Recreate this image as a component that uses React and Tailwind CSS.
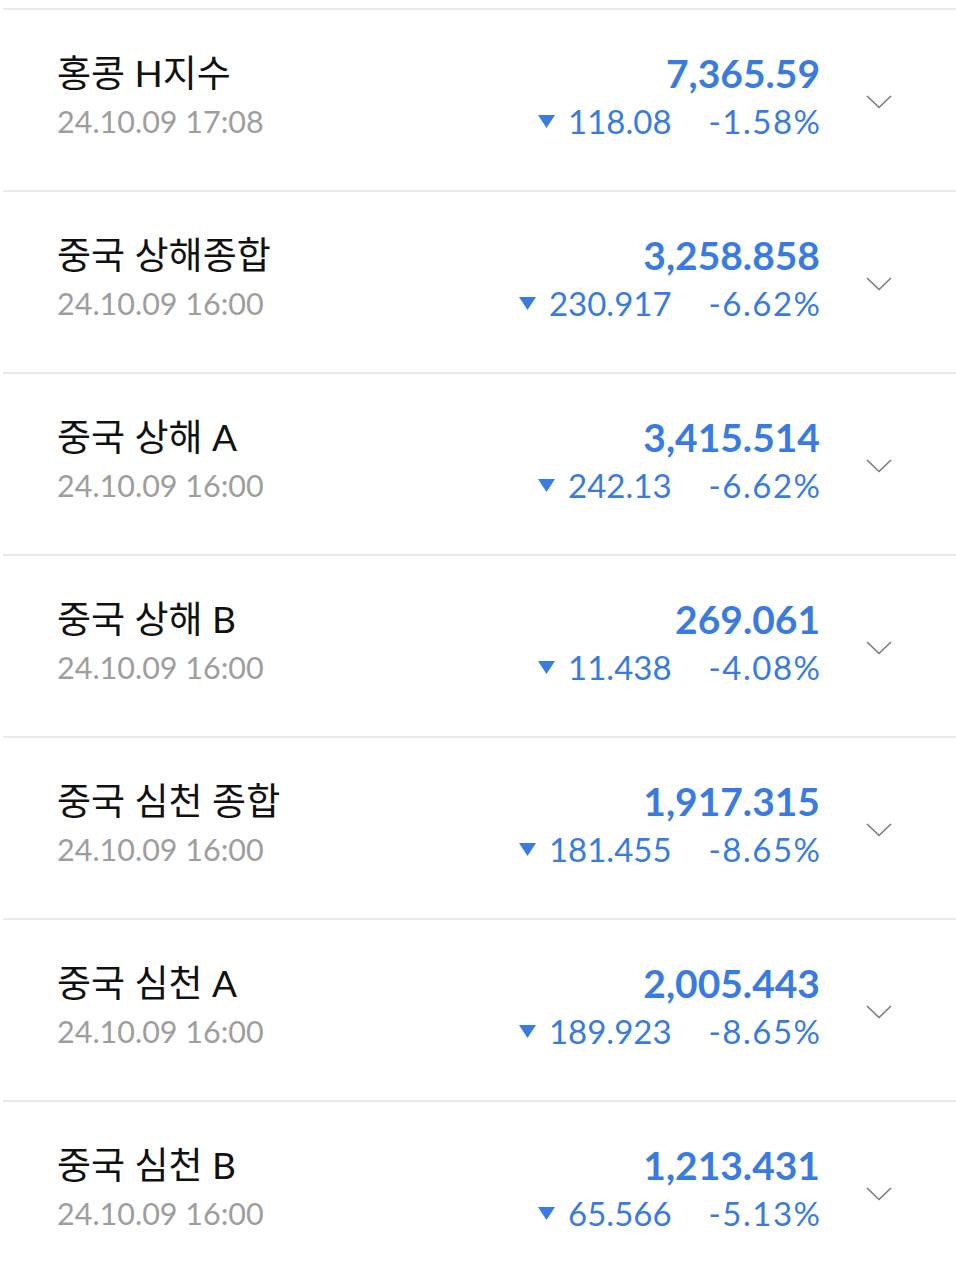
import React from "react";

const rows = [
  { name: "홍콩 H지수", time: "24.10.09 17:08", value: "7,365.59", change: "118.08", rate: "-1.58%" },
  { name: "중국 상해종합", time: "24.10.09 16:00", value: "3,258.858", change: "230.917", rate: "-6.62%" },
  { name: "중국 상해 A", time: "24.10.09 16:00", value: "3,415.514", change: "242.13", rate: "-6.62%" },
  { name: "중국 상해 B", time: "24.10.09 16:00", value: "269.061", change: "11.438", rate: "-4.08%" },
  { name: "중국 심천 종합", time: "24.10.09 16:00", value: "1,917.315", change: "181.455", rate: "-8.65%" },
  { name: "중국 심천 A", time: "24.10.09 16:00", value: "2,005.443", change: "189.923", rate: "-8.65%" },
  { name: "중국 심천 B", time: "24.10.09 16:00", value: "1,213.431", change: "65.566", rate: "-5.13%" },
];

const font = { fontFamily: '"Lato", "Noto Sans CJK KR", sans-serif' };

const Row = ({ item }) => {
  return (
    <div className="flex items-center h-[182px] border-t-2 border-[#eaeaea] pl-[54px] pr-[64px] pb-[6px]">
      <div className="flex-1">
        <div className="text-[37px] leading-[48px] text-[#111]">{item.name}</div>
        <div className="text-[30.5px] leading-[48px] text-[#9e9e9e]">{item.time}</div>
      </div>
      <div className="text-right text-[#3a7be2]">
        <div className="text-[39px] leading-[48px] font-bold">{item.value}</div>
        <div className="flex items-center justify-end text-[33px] leading-[48px]">
          <svg width="17" height="13" viewBox="0 0 17 13" className="mr-[13px]">
            <polygon points="0,0 17,0 8.5,13" fill="#3a7be2" />
          </svg>
          <span>{item.change}</span>
          <span className="ml-[37px] tracking-[1.5px] mr-[-1.5px]">{item.rate}</span>
        </div>
      </div>
      <div className="ml-[46px] mt-[10px] w-[26px] h-[14px]">
        <svg width="26" height="14" viewBox="0 0 26 14" fill="none">
          <polyline points="1,1 13,12.5 25,1" stroke="#7a7a7a" strokeWidth="1.6" />
        </svg>
      </div>
    </div>
  );
};

const App = () => {
  return (
    <div className="w-[956px] h-[1280px] overflow-hidden bg-white pt-[8px] pl-[3px]" style={font}>
      {rows.map((item) => (
        <Row key={item.name} item={item} />
      ))}
    </div>
  );
};

export default App;
